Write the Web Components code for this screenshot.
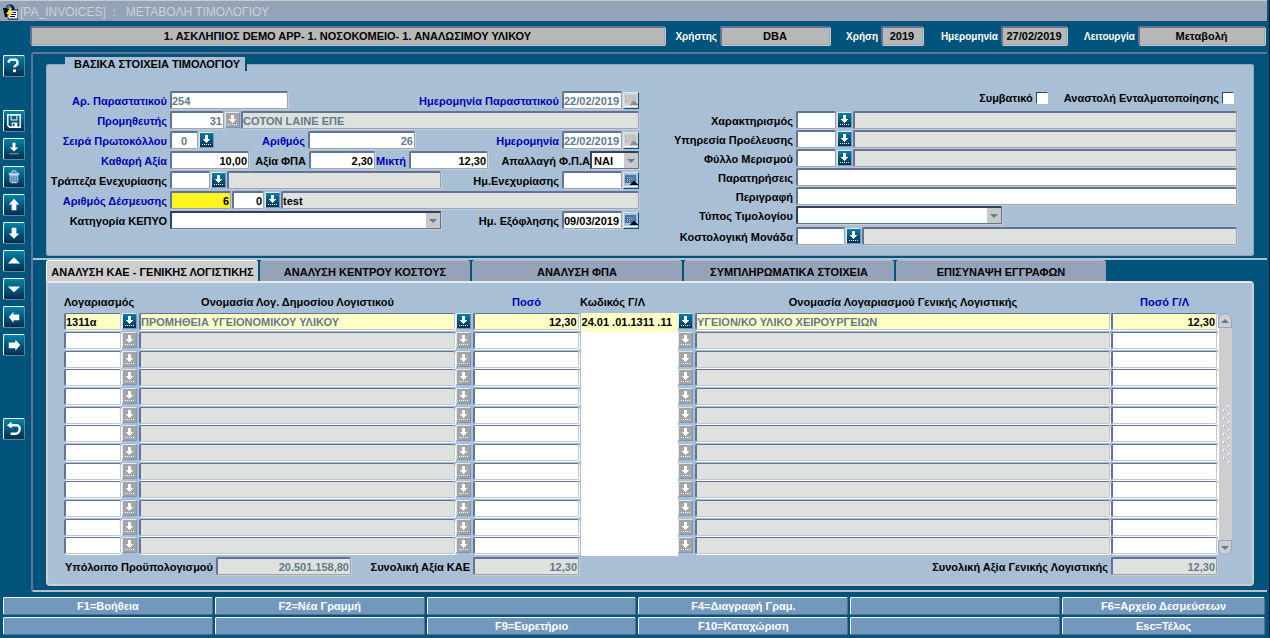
<!DOCTYPE html>
<html lang="el">
<head>
<meta charset="utf-8">
<title>ΜΕΤΑΒΟΛΗ ΤΙΜΟΛΟΓΙΟΥ</title>
<style>
html { height: 100%; }
body { margin: 0; min-height: 100%; background: #00537a; font: bold 11px/14px "Liberation Sans", Arial, sans-serif; color: #000; }
</style>
</head>
<body>
<invoice-app></invoice-app>
<script>
const BASE = `
*, *::before, *::after { box-sizing: border-box; }
:host { display: block; box-sizing: border-box; }
button, input, select { font: inherit; color: inherit; margin: 0; padding: 0; border-radius: 0; }
.box {
  width: 100%; height: 18px; min-width: 0; padding: 0 1px 0 0; background: #fff; outline: 0;
  border: 1px solid #94a5bd; border-top: 2px solid #637396; border-left: 2px solid #637396;
  border-radius: 2px; box-shadow: 1px 1px 0 #ccc;
}`;

class Base extends HTMLElement {
  connectedCallback() {
    if (this.shadowRoot) return;
    const root = this.attachShadow({ mode: "open" });
    root.innerHTML = `<style>${BASE}${this.css()}</style>${this.html()}`;
  }
  attr(name) { return this.getAttribute(name) || ""; }
  css() { return ""; }
}

/* Text box with its label. Kinds: input, ro (display only), gray, key, current. */
customElements.define("entry-field", class extends Base {
  css() { return `
:host { display: flex; align-items: center; gap: 3px; flex: none; }
:host([grow]) { flex: 1 1 0; min-width: 0; }
:host([grow]) .box { flex: 1; }
label { flex: none; display: flex; justify-content: flex-end; width: var(--label, auto); padding-top: 2px; white-space: nowrap; }
:host([tone=blue]) label { color: #0000b5; }
:host([tone=white]) { font-size: 10px; }
:host([tone=white]) label { color: #fff; }
.box { width: var(--box, 100%); text-align: var(--align, left); font-size: 11px; }
:host([align=right]) { --align: right; }
:host([align=center]) { --align: center; }
:host([kind=ro]) .box { background: #dee1de; }
:host([kind=gray]) .box { background: #b8b8b8; height: 19px; }
:host([kind=key]) .box { background: #fff321; }
:host([kind=current]) .box { background: #ffffc6; }
:host([dim]) .box { color: #637a8c; }
:host([grid]) .box { height: 17px; border-top-width: 1px; border-bottom-color: #bcc6d4; border-right-color: #bcc6d4; box-shadow: 1px 1px 0 #fff; padding-top: 1px; }`; }
  html() {
    const ro = /ro|gray/.test(this.attr("kind")) || this.hasAttribute("dim") ? "readonly" : "";
    const label = this.attr("label");
    return `${label ? `<label for="f">${label}</label>` : ""}
<input id="f" class="box" type="text" ${ro} value="${this.attr("value")}" ${label ? "" : `aria-label="${this.attr("name")}"`}>`;
  }
});

/* Drop-down with its label. */
customElements.define("choice-field", class extends Base {
  css() { return `
:host { display: flex; align-items: center; gap: 3px; flex: none; }
:host([grow]) { flex: 1 1 0; min-width: 0; }
:host([tight]) { gap: 0; }
label { flex: none; display: flex; justify-content: flex-end; width: var(--label, auto); padding-top: 2px; white-space: nowrap; }
.wrap { display: grid; width: var(--box, 100%); }
.wrap > * { grid-area: 1 / 1; }
select { appearance: none; }
select.box { padding: 1px 0 0 2px; border-color: #31415f #637396 #637396 #31415f; border-radius: 1px; line-height: 14px; }
svg { justify-self: end; align-self: center; margin-right: 1px; pointer-events: none; }`; }
  html() { return `<label for="s">${this.attr("label")}</label>
<div class="wrap"><select id="s" class="box"><option>${this.attr("value")}</option></select>
<svg width="14" height="15"><rect width="14" height="15" fill="#c9c9c9"/><path d="M3 6h8l-4 4z" fill="#5d7aa0"/></svg></div>`; }
});

customElements.define("check-field", class extends Base {
  css() { return `
label { display: flex; align-items: center; gap: 3px; white-space: nowrap; }
input { appearance: none; width: 12px; height: 12px; background: #fff; border: 1px solid #fff; border-top-color: #31415f; border-left-color: #31415f; }`; }
  html() { return `<label>${this.attr("label")}<input type="checkbox"></label>`; }
});

/* List-of-values button. */
customElements.define("lov-button", class extends Base {
  css() { return `
:host { flex: none; width: 15px; }
button { display: block; width: 15px; height: 16px; border: 1px solid #7398bd; border-top-color: #dfe8f0; border-left-color: #dfe8f0; background: linear-gradient(#0081a5, #003152); }
svg { display: block; }
:host([off]) button { background: #a5a5a5; }`; }
  html() { return `<button aria-label="Λίστα τιμών"><svg width="13" height="14" fill="#fff" shape-rendering="crispEdges">
<path d="M5 2h3v4h2v1H9v1H8v1H7v1H6V9H5V8H4V7H3V6h2zM2 11h1v1H2zM4 11h1v1H4zM6 11h1v1H6zM8 11h1v1H8zM10 11h1v1h-1z"/></svg></button>`; }
});

customElements.define("date-button", class extends Base {
  css() { return `
:host { flex: none; width: 16px; }
button { display: block; width: 16px; height: 17px; border: 1px solid #00537a; border-top-color: #dfe8f0; border-left-color: #dfe8f0; background: #a9c0da; }
svg { display: block; }
:host([off]) button { background: #d4d4d4; }`; }
  html() {
    const off = this.hasAttribute("off");
    return `<button aria-label="Ημερολόγιο"><svg width="14" height="15" shape-rendering="crispEdges">
<rect x="1" y="2" width="11" height="8" fill="${off ? "#bdbdbd" : "#4a73a5"}"/>
<path d="M3 4h8M3 6h8M3 8h3" stroke="${off ? "#d9d9d9" : "#9cb8d8"}" stroke-dasharray="1 1"/>
<path d="M6 12h8v-1h-1v-1h-1V9h-1V8H9v1H8v1H7v1H6z" fill="${off ? "#8c8c8c" : "#000"}"/><path d="M0 13h14v1H0z" fill="#fff"/></svg></button>`;
  }
});

const TOOLS = {
  help: ["Βοήθεια", `<path d="M5 7V5.500L6.500 4h6L14 5.500v3L11 11v1" fill="none" stroke="#fff" stroke-width="2.500"/><path d="M9.500 14h3v3h-3z"/>`],
  save: ["Αποθήκευση", `<path d="M4 4h13v13H6l-2-2z" fill="none" stroke="#fff" stroke-width="1.500"/><path d="M7 4h7v6H7zM8 12h6v5H8z"/><path d="M8 5h5v4H8zM9 13h2v3H9z" fill="#00608a"/>`],
  list: ["Λίστα", `<path d="M9 4h3v5h3l-4.500 4L6 9h3zM6 15h1v1H6zM8 15h1v1H8zM10 15h1v1h-1zM12 15h1v1h-1zM14 15h1v1h-1z"/>`],
  trash: ["Διαγραφή", `<path d="M6.500 8.500v7l1 1h6l1-1v-7zM8.500 9v7M10.500 9v7M12.500 9v7M5.500 6.500h10v1.500h-10zM8 6l1-2h3l1 2" fill="none" stroke="#e4eaff"/>`],
  up: ["Προηγούμενη εγγραφή", `<path d="M10.500 4l5.500 6h-3v6H8v-6H5z"/>`],
  down: ["Επόμενη εγγραφή", `<path d="M8 5h5v6h3l-5.500 5.500L5 11h3z"/>`],
  pageup: ["Προηγούμενο μπλοκ", `<path d="M10.500 6.500L17 13H4z"/>`],
  pagedown: ["Επόμενο μπλοκ", `<path d="M4 8h13l-6.500 6z"/>`],
  left: ["Προηγούμενο πεδίο", `<path d="M5 10.500L10 5v3h6v6h-6v2.500z"/>`],
  right: ["Επόμενο πεδίο", `<path d="M17 10.500L12 5v3H5v6h7v2.500z"/>`],
  undo: ["Επιστροφή", `<path d="M3 6.500L8 3v7z"/><path d="M6 6.500h7a3.500 3.500 0 0 1 3.500 3.500c0 3-2 5.500-4.500 5.500H7" fill="none" stroke="#fff" stroke-width="2.500"/>`]
};
customElements.define("tool-button", class extends Base {
  css() { return `
button { display: block; width: 22px; height: 22px; border: 1px solid #63849f; border-top-color: #fff; border-left-color: #fff; border-radius: 2px; background: linear-gradient(#0083a8, #002d4e); }
svg { display: block; }`; }
  html() {
    const [name, art] = TOOLS[this.attr("icon")];
    return `<button aria-label="${name}"><svg width="20" height="20" viewBox="0 0 21 21" fill="#fff">${art}</svg></button>`;
  }
});

customElements.define("tool-rail", class extends Base {
  css() { return `:host { display: flex; flex-direction: column; gap: 6px; padding: 3px 3px 0; }
.gap { margin-top: 27px; } .far { margin-top: 56px; }`; }
  html() {
    return Object.keys(TOOLS).map(k => `<tool-button icon="${k}" class="${k === "save" ? "gap" : k === "undo" ? "far" : ""}"></tool-button>`).join("");
  }
});

customElements.define("title-bar", class extends Base {
  css() { return `
:host { display: flex; align-items: center; gap: 2px; height: 21px; padding: 1px 3px 0; background: #94a3b8; border-top: 1px solid #ccc; margin-right: 2px; font: 12px/16px "Liberation Sans", Arial, sans-serif; color: #d0d0d0; }
h1 { font: inherit; margin: 0; white-space: pre; } svg { flex: none; }`; }
  html() { return `<svg width="15" height="16"><circle cx="7" cy="5" r="4.500" fill="#000063"/><path d="M3 3l3-2 3 2-1 3-3-1z" fill="#5a8a94"/>
<path d="M0 4h4v9H2z" fill="#000"/><path d="M5 6h10v9H5z" fill="#fff" stroke="#000042"/><path d="M9 8.500h4M8 10.500h5M7 12.500h5" stroke="#000084"/><path d="M7 4l-4 6h3l-2 5 6-7H7l2-4z" fill="#ffe600"/></svg>
<h1>[PA_INVOICES]  :   <slot></slot></h1>`; }
});

customElements.define("session-bar", class extends Base {
  css() { return `:host { display: flex; padding: 5px 4px 7px 30px; }
.a { margin-left: 10px; } .b { margin-left: 14px; } .c { margin-left: 20px; }`; }
  html() { return `
<entry-field grow kind="gray" align="center" name="Εφαρμογή" value="1. ΑΣΚΛΗΠΙΟΣ DEMO APP- 1. ΝΟΣΟΚΟΜΕΙΟ- 1. ΑΝΑΛΩΣΙΜΟΥ ΥΛΙΚΟΥ"></entry-field>
<entry-field class="a" tone="white" kind="gray" align="center" label="Χρήστης" value="DBA" style="--label:42px;--box:110px"></entry-field>
<entry-field class="b" tone="white" kind="gray" align="center" label="Χρήση" value="2019" style="--label:34px;--box:42px"></entry-field>
<entry-field class="c" tone="white" kind="gray" align="center" label="Ημερομηνία" value="27/02/2019" style="--label:55px;--box:66px"></entry-field>
<entry-field class="c" tone="white" kind="gray" align="center" label="Λειτουργία" value="Μεταβολή" style="--label:48px;--box:127px"></entry-field>`; }
});

customElements.define("invoice-form", class extends Base {
  css() { return `
fieldset { margin: 0; padding: 0 16px 10px 0; min-width: 0; border: 1px solid #94a5bd; background: #a9bfd5; border-radius: 3px; }
legend { margin-left: 18px; padding: 0 5px 0 9px; height: 14px; background: #a9bfd5; border-right: 2px solid #00537a; }
.cols { display: grid; grid-template-columns: 592fr 598fr; padding-top: 20px; }
.col { display: grid; align-content: start; row-gap: 2px; min-width: 0; --label: 120px; }
.right { row-gap: 1px; --label: 154px; }
.row { display: flex; height: 18px; gap: 1px; }
.row > lov-button, .row > date-button { align-self: center; }
.end { --label: auto; margin-left: auto; --box: 60px; }
.checks { justify-content: flex-end; align-items: center; gap: 16px; height: 19px; --label: auto; padding: 0 3px 6px 0; }
.last { margin-top: 2px; }`; }
  html() { return `
<fieldset><legend>ΒΑΣΙΚΑ ΣΤΟΙΧΕΙΑ ΤΙΜΟΛΟΓΙΟΥ</legend>
<div class="cols">
<div class="col">
 <div class="row"><entry-field tone="blue" dim label="Αρ. Παραστατικού" value="254" style="--box:118px"></entry-field>
  <entry-field class="end" tone="blue" dim label="Ημερομηνία Παραστατικού" value="22/02/2019"></entry-field><date-button off></date-button></div>
 <div class="row"><entry-field tone="blue" dim align="right" label="Προμηθευτής" value="31" style="--box:54px"></entry-field><lov-button off></lov-button>
  <entry-field grow kind="ro" dim name="Επωνυμία" value="COTON LAINE ΕΠΕ"></entry-field></div>
 <div class="row"><entry-field tone="blue" dim align="center" label="Σειρά Πρωτοκόλλου" value="0" style="--box:28px"></entry-field><lov-button></lov-button>
  <entry-field tone="blue" dim align="right" label="Αριθμός" value="26" style="--label:90px;--box:107px"></entry-field>
  <entry-field class="end" tone="blue" dim label="Ημερομηνία" value="22/02/2019"></entry-field><date-button off></date-button></div>
 <div class="row"><entry-field tone="blue" align="right" label="Καθαρή Αξία" value="10,00" style="--box:79px"></entry-field>
  <entry-field align="right" label="Αξία ΦΠΑ" value="2,30" style="--label:56px;--box:66px"></entry-field>
  <entry-field tone="blue" align="right" label="Μικτή" value="12,30" style="--label:30px;--box:79px"></entry-field>
  <choice-field tight class="end" label="Απαλλαγή Φ.Π.Α" value="ΝΑΙ" style="--box:49px"></choice-field></div>
 <div class="row"><entry-field label="Τράπεζα Ενεχυρίασης" style="--box:40px"></entry-field><lov-button></lov-button>
  <entry-field grow kind="ro" name="Τράπεζα"></entry-field>
  <entry-field label="Ημ.Ενεχυρίασης" style="--label:117px;--box:60px"></entry-field><date-button></date-button></div>
 <div class="row"><entry-field tone="blue" kind="key" align="right" label="Αριθμός Δέσμευσης" value="6" style="--box:61px"></entry-field>
  <entry-field align="right" name="Έτος" value="0" style="--box:32px"></entry-field><lov-button></lov-button>
  <entry-field grow kind="ro" name="Περιγραφή δέσμευσης" value="test"></entry-field></div>
 <div class="row"><choice-field grow label="Κατηγορία ΚΕΠΥΟ" value=""></choice-field>
  <entry-field label="Ημ. Εξόφλησης" value="09/03/2019" style="--label:117px;--box:60px"></entry-field><date-button></date-button></div>
</div>
<div class="col right">
 <div class="row checks"><check-field label="Συμβατικό"></check-field><check-field label="Αναστολή Ενταλματοποίησης"></check-field></div>
 ${["Χαρακτηρισμός", "Υπηρεσία Προέλευσης", "Φύλλο Μερισμού"].map(l => `<div class="row"><entry-field label="${l}" style="--box:40px"></entry-field><lov-button></lov-button><entry-field grow kind="ro" name="${l}"></entry-field></div>`).join("")}
 <div class="row"><entry-field grow label="Παρατηρήσεις"></entry-field></div>
 <div class="row"><entry-field grow label="Περιγραφή"></entry-field></div>
 <div class="row"><choice-field label="Τύπος Τιμολογίου" value="" style="--box:206px"></choice-field></div>
 <div class="row last"><entry-field label="Κοστολογική Μονάδα" style="--box:49px"></entry-field><lov-button></lov-button><entry-field grow kind="ro" name="Μονάδα"></entry-field></div>
</div>
</div></fieldset>`; }
});

customElements.define("tab-strip", class extends Base {
  css() { return `
:host { display: flex; gap: 2px; height: 21px; }
button { flex: 0 1 210px; border: 0; border-top: 1px solid #a9b8ca; background: #94a3b8; border-radius: 3px 3px 0 0; padding: 2px 0 0; white-space: nowrap; }
button[aria-selected=true] { flex-basis: 212px; background: #cecece; border-top-color: #fff; border-left: 1px solid #fff; }`; }
  html() {
    return ["ΑΝΑΛΥΣΗ ΚΑΕ - ΓΕΝΙΚΗΣ ΛΟΓΙΣΤΙΚΗΣ", "ΑΝΑΛΥΣΗ ΚΕΝΤΡΟΥ ΚΟΣΤΟΥΣ", "ΑΝΑΛΥΣΗ ΦΠΑ", "ΣΥΜΠΛΗΡΩΜΑΤΙΚΑ ΣΤΟΙΧΕΙΑ", "ΕΠΙΣΥΝΑΨΗ ΕΓΓΡΑΦΩΝ"]
      .map((t, i) => `<button role="tab" aria-selected="${!i}">${t}</button>`).join("");
  }
});

customElements.define("scroll-rail", class extends Base {
  css() { return `
:host { display: flex; flex-direction: column; width: 14px; }
button { height: 15px; border: 1px solid #94a5bd; background: #cecece; border-radius: 7px 7px 0 0; }
button:last-child { border-radius: 0 0 7px 7px; }
svg { display: block; margin: auto; }
.track { flex: 1; display: grid; align-content: center; justify-items: center; background: #cecece; border-left: 1px solid #fff; }`; }
  html() {
    let dots = "";
    for (let i = 0; i < 15; i++) {
      const x = i % 2 ? 2 : 7, y = i * 4 + 1;
      dots += `<path d="M${x} ${y}h2v2h-2z" fill="#fff"/><path d="M${x + 1} ${y + 1}h1v1h-1z" fill="#8ca0bd"/>`;
    }
    return `<button aria-label="Πάνω"><svg width="10" height="6"><path d="M1 5h8L5 1z" fill="#5d7aa0"/></svg></button>
<div class="track"><svg width="10" height="60">${dots}</svg></div>
<button aria-label="Κάτω"><svg width="10" height="6"><path d="M1 1h8L5 5z" fill="#5d7aa0"/></svg></button>`;
  }
});

customElements.define("account-grid", class extends Base {
  css() { return `
:host { display: flex; padding: 0 20px 9px 16px; background: #a9bfd5; border: 2px solid #cecece; border-top-color: #e9e9e9; border-radius: 0 4px 4px 4px; }
table { flex: 1; min-width: 0; width: 100%; table-layout: fixed; border-collapse: collapse; }
th, td { padding: 0; font: inherit; }
th { height: 30px; padding-top: 7px; text-align: center; vertical-align: middle; white-space: nowrap; }
th.first { text-align: left; }
th.blue { color: #0000b5; }
tbody tr { height: 19px; } tbody tr:nth-child(3n) { height: 18px; }
tbody td { vertical-align: top; padding-right: 1px; }
td.code { background: #fff; padding: 0 1px 0 0; border-left: 1px solid #a9bfd5; }
td.code input { display: block; width: 100%; height: 18px; border: 0; background: none; padding: 0 0 0 1px; }
tr.on td.code { background: #ffffc6; }
tfoot td { height: 19px; vertical-align: bottom; padding-right: 1px; }
.sum { display: flex; justify-content: space-between; }
.sum.end { justify-content: flex-end; }
scroll-rail { margin: 30px 0 20px; }`; }
  html() {
    const names = ["Λογαριασμός", "Ονομασία Λογ. Δημοσίου Λογιστικού", "Ποσό", "Κωδικός Γ/Λ", "Ονομασία Λογαριασμού Γενικής Λογιστικής", "Ποσό Γ/Λ"];
    const row = v => {
      const lov = `<td><lov-button ${v ? "" : "off"}></lov-button></td>`;
      const cell = i => v ? v[i] : "";
      const f = (i, kind, more = "") => `<td><entry-field grid kind="${v ? "current" : kind}" ${more} name="${names[i]}" value="${cell(i)}"></entry-field></td>`;
      return `<tr class="${v ? "on" : ""}">${f(0, "input")}${lov}${f(1, "ro", "dim")}${lov}${f(2, "input", 'align="right"')}
<td class="code"><input type="text" aria-label="${names[3]}" value="${cell(3)}"></td>${lov}${f(4, "ro", "dim")}${f(5, "input", 'align="right"')}</tr>`;
    };
    return `<table>
<colgroup><col style="width:58px"><col style="width:17px"><col style="width:317px"><col style="width:17px"><col style="width:107px"><col style="width:98px"><col style="width:17px"><col><col style="width:107px"></colgroup>
<thead><tr><th class="first" colspan="2">${names[0]}</th><th>${names[1]}</th><th></th><th class="blue">${names[2]}</th><th class="first">${names[3]}</th><th></th><th>${names[4]}</th><th class="blue">${names[5]}</th></tr></thead>
<tbody>${row(["1311α", "ΠΡΟΜΗΘΕΙΑ ΥΓΕΙΟΝΟΜΙΚΟΥ ΥΛΙΚΟΥ", "12,30", "24.01 .01.1311 .11", "ΥΓΕΙΟΝ/ΚΟ ΥΛΙΚΟ ΧΕΙΡΟΥΡΓΕΙΩΝ", "12,30"])}${row().repeat(12)}</tbody>
<tfoot><tr><td colspan="5"><div class="sum">
<entry-field kind="ro" dim align="right" label="Υπόλοιπο Προϋπολογισμού" value="20.501.158,80" style="--label:149px;--box:135px"></entry-field>
<entry-field kind="ro" dim align="right" label="Συνολική Αξία ΚΑΕ" value="12,30" style="--box:106px"></entry-field></div></td>
<td colspan="4"><div class="sum end"><entry-field kind="ro" dim align="right" label="Συνολική Αξία Γενικής Λογιστικής" value="12,30" style="--box:106px"></entry-field></div></td></tr></tfoot>
</table><scroll-rail></scroll-rail>`;
  }
});

customElements.define("function-keys", class extends Base {
  css() { return `
:host { display: grid; grid-template-columns: repeat(5, minmax(0, 210fr)) minmax(0, 203fr); gap: 2px; padding: 5px 4px 2px 3px; }
button { height: 18px; overflow: hidden; color: #fff; background: #7398bd; border: 1px solid #4f7299; border-top-color: #fff; border-left-color: #fff; border-radius: 2px; white-space: nowrap; }`; }
  html() {
    return ["F1=Βοήθεια", "F2=Νέα Γραμμή", "", "F4=Διαγραφή Γραμ.", "", "F6=Αρχείο Δεσμεύσεων", "", "", "F9=Ευρετήριο", "F10=Καταχώριση", "", "Esc=Τέλος"]
      .map(t => `<button>${t}</button>`).join("");
  }
});

customElements.define("invoice-app", class extends Base {
  css() { return `
:host { border-right: 1px solid #001c2c; }
.body { display: grid; grid-template-columns: 31px 1fr; }
main { min-width: 0; margin-right: 2px; border: 2px solid #637396; border-right: 0; border-radius: 3px 0 0 3px; border-bottom-color: #b5bfcf; }
.part { padding: 3px 13px 2px 13px; }
.part + .part { padding: 0 13px 4px; border-top: 2px solid #b5bfcf; }`; }
  html() { return `<title-bar>ΜΕΤΑΒΟΛΗ ΤΙΜΟΛΟΓΙΟΥ</title-bar><session-bar></session-bar>
<div class="body"><tool-rail></tool-rail>
<main><div class="part"><invoice-form></invoice-form></div>
<div class="part"><tab-strip></tab-strip><account-grid></account-grid></div></main></div>
<function-keys></function-keys>`; }
});
</script>
</body>
</html>
